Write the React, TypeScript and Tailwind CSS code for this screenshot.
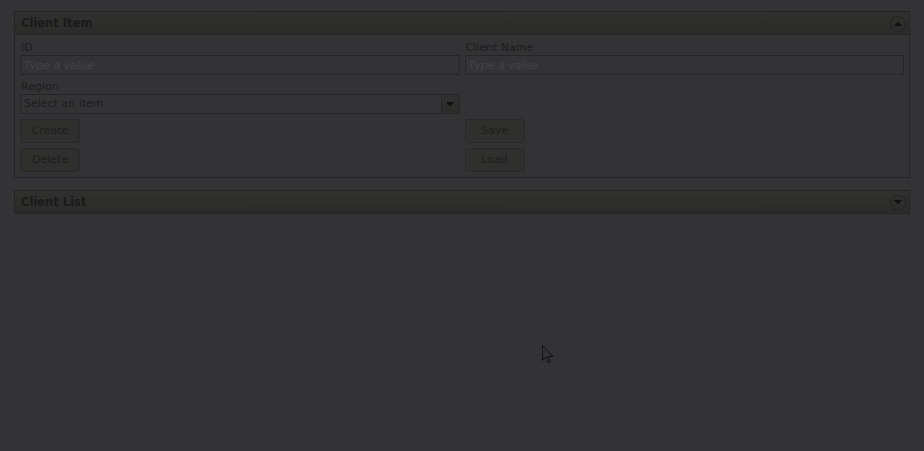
import { ChangeEvent, useState } from "react";

const font = { fontFamily: '"DejaVu Sans", Verdana, sans-serif' };

const Toggle = ({ up }: { up: boolean }) => (
  <span className="flex h-[16px] w-[16px] items-center justify-center rounded-full border border-[#222224]">
    <svg width="8" height="5" viewBox="0 0 8 5">
      {up ? <polygon points="0,5 8,5 4,0.5" fill="#0f0f0f" /> : <polygon points="0,0 8,0 4,4.5" fill="#0f0f0f" />}
    </svg>
  </span>
);

const PanelHeader = ({ title, open }: { title: string; open: boolean }) => (
  <div className="flex h-[22px] items-center justify-between bg-gradient-to-b from-[#30302e] to-[#2b2b2a] pl-[6px] pr-[3px] pt-[1px]">
    <span className="text-[11.5px] font-bold text-[#1a1a1a]">{title}</span>
    <Toggle up={open} />
  </div>
);

const Field = ({ label, value, onChange }: { label: string; value: string; onChange: (e: ChangeEvent<HTMLInputElement>) => void }) => (
  <div className="flex flex-col">
    <label className="h-[14px] pl-[1px] text-[11px] leading-[13px] text-[#1c1c1c]">{label}</label>
    <input
      value={value}
      onChange={onChange}
      placeholder="Type a value"
      className="h-[20px] border border-[#262628] bg-[#333335] px-[3px] text-[11px] italic text-[#1c1c1c] outline-none placeholder:text-[#434345]"
    />
  </div>
);

const Btn = ({ children }: { children: string }) => (
  <button className="h-[24px] w-[60px] rounded-[3px] border border-[#28282a] bg-[#2f2f2d] text-[11px] text-[#1d1d1d]">
    {children}
  </button>
);

export default function App() {
  const [id, setId] = useState("");
  const [name, setName] = useState("");

  return (
    <div className="relative h-[451px] w-[924px] overflow-hidden bg-[#333335] px-[14px] pt-[11px]" style={font}>
      <div className="border border-[#242426]">
        <div className="border-b border-[#242426]">
          <PanelHeader title="Client Item" open />
        </div>
        <div className="grid grid-cols-2 gap-x-[5px] px-[5px] pt-[6px] pb-[5px]">
          <Field label="ID" value={id} onChange={(e) => setId(e.target.value)} />
          <Field label="Client Name" value={name} onChange={(e) => setName(e.target.value)} />
          <div className="mt-[5px] flex flex-col">
            <label className="h-[14px] pl-[1px] text-[11px] leading-[13px] text-[#1c1c1c]">Region</label>
            <div className="flex h-[20px] border border-[#262628]">
              <span className="flex-1 px-[3px] text-[11px] leading-[18px] text-[#1c1c1c]">Select an item</span>
              <span className="flex w-[18px] items-center justify-center border-l border-[#262628] bg-gradient-to-b from-[#313131] to-[#2b2b2a]">
                <svg width="8" height="5" viewBox="0 0 8 5">
                  <polygon points="0,0 8,0 4,4.5" fill="#0f0f0f" />
                </svg>
              </span>
            </div>
          </div>
          <div />
          <div className="mt-[5px] flex flex-col gap-[5px]">
            <Btn>Create</Btn>
            <Btn>Delete</Btn>
          </div>
          <div className="mt-[5px] flex flex-col gap-[5px]">
            <Btn>Save</Btn>
            <Btn>Load</Btn>
          </div>
        </div>
      </div>

      <div className="mt-[12px] border border-[#242426]">
        <PanelHeader title="Client List" open={false} />
      </div>

      <svg className="absolute left-[542px] top-[345px]" width="13" height="20" viewBox="0 0 13 20">
        <path d="M0.5,0.5 L0.5,15.5 L4,12 L6.5,18 L8.5,17 L6,11.5 L11,11.5 Z" fill="#333335" stroke="#111" strokeWidth="1" />
      </svg>
    </div>
  );
}
